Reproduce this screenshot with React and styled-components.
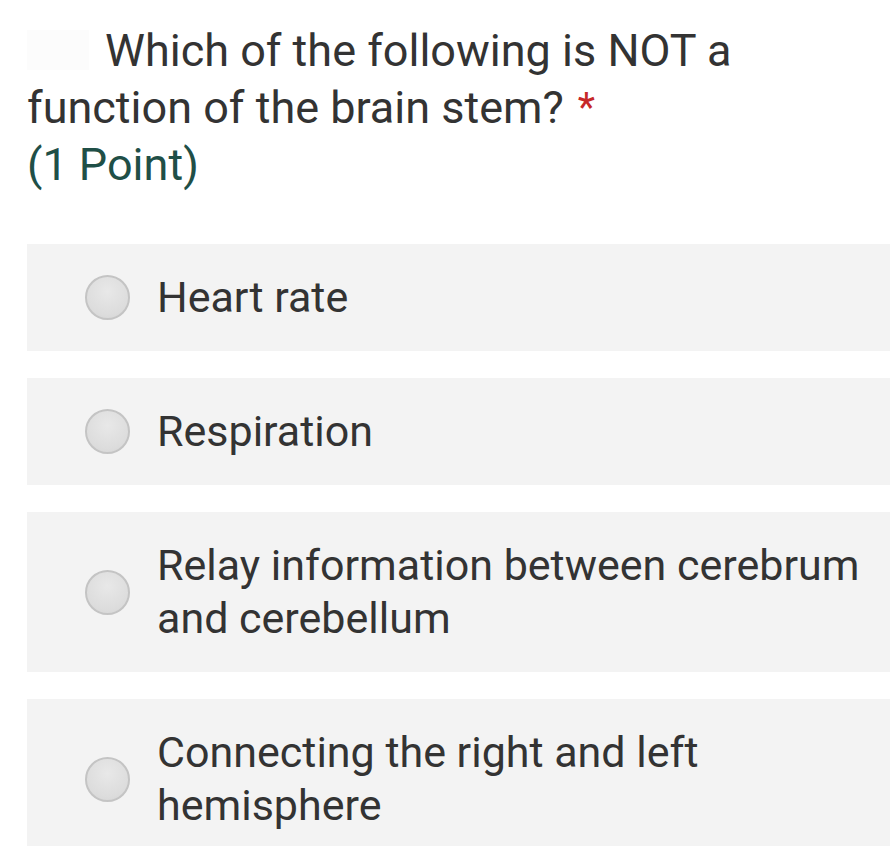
import React from "react";
import styled, { createGlobalStyle } from "styled-components";

const Global = createGlobalStyle`
  body {
    margin: 0;
    background: #ffffff;
    font-family: Roboto, "Noto Sans", "Liberation Sans", sans-serif;
  }
`;

const options = [
  "Heart rate",
  "Respiration",
  "Relay information between cerebrum and cerebellum",
  "Connecting the right and left hemisphere",
];

export default function App() {
  return (
    <Page>
      <Global />
      <Question>
        <Title>
          <NumberMark />
          Which of the following is NOT a function of the brain stem?
          <Required>*</Required>
        </Title>
        <Points>(1 Point)</Points>
      </Question>
      <Options>
        {options.map((text) => (
          <Option key={text}>
            <Radio />
            <Label>{text}</Label>
          </Option>
        ))}
      </Options>
    </Page>
  );
}

const Page = styled.div`
  width: 890px;
  height: 846px;
  overflow: hidden;
  padding: 22px 0 0 27px;
  box-sizing: border-box;
`;

const Question = styled.div`
  color: #333333;
  font-size: 45px;
  line-height: 57px;
  padding-right: 100px;
`;

const Title = styled.div`
  letter-spacing: 0;
`;

const NumberMark = styled.span`
  display: inline-block;
  width: 62px;
  height: 40px;
  margin-right: 16px;
  vertical-align: -4px;
  background: #fcfcfc;
`;

const Required = styled.span`
  display: inline-block;
  color: #c62828;
  font-size: 40px;
  line-height: 40px;
  margin-left: 14px;
  vertical-align: 2px;
`;

const Points = styled.div`
  color: #1f4f47;
`;

const Options = styled.div`
  display: flex;
  flex-direction: column;
  gap: 27px;
  margin-top: 51px;
`;

const Option = styled.div`
  display: flex;
  align-items: center;
  gap: 27px;
  background: #f3f3f3;
  padding: 27px 20px 27px 58px;
`;

const Radio = styled.span`
  flex: none;
  width: 45px;
  height: 45px;
  border-radius: 50%;
  border: 2px solid #c4c4c4;
  background: radial-gradient(circle at 50% 35%, #e8e8e8 0%, #dcdcdc 70%, #d2d2d2 100%);
  box-sizing: border-box;
`;

const Label = styled.span`
  color: #333333;
  font-size: 43px;
  line-height: 53px;
`;
